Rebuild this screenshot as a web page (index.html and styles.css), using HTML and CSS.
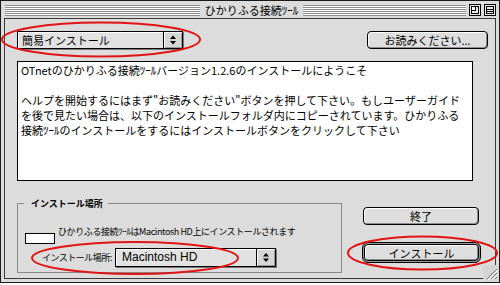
FILE: index.html
```html
<!DOCTYPE html>
<html lang="ja">
<head>
<meta charset="utf-8">
<title>ひかりふる接続ﾂｰﾙ</title>
<link rel="stylesheet" href="styles.css">
</head>
<body>
<div class="window">
  <div class="titlebar">
    <div class="grooves left"></div>
    <div class="title">ひかりふる接続ﾂｰﾙ</div>
    <div class="grooves right"></div>
    <div class="wbox">
      <svg width="12" height="12" viewBox="0 0 12 12"><rect x="0.5" y="0.5" width="11" height="11" fill="#e8e8e8" stroke="#000"/><rect x="2.5" y="2.5" width="7" height="7" fill="none" stroke="#000"/><rect x="2.5" y="2.5" width="4" height="4" fill="#fff" stroke="#000"/></svg>
    </div>
    <div class="wbox">
      <svg width="12" height="12" viewBox="0 0 12 12"><rect x="0.5" y="0.5" width="11" height="11" fill="#e8e8e8" stroke="#000"/><rect x="2.5" y="2.5" width="7" height="7" fill="none" stroke="#000"/><line x1="2" y1="5.5" x2="10" y2="5.5" stroke="#000"/><line x1="2" y1="7.5" x2="10" y2="7.5" stroke="#000"/></svg>
    </div>
  </div>
  <div class="frame">
    <div class="toprow">
      <div class="popup mode">
        <span class="popup-label">簡易インストール</span>
        <span class="popup-arrows"><svg width="18" height="16" viewBox="0 0 18 16"><polygon points="6,7 9,3.5 12,7" fill="#000"/><polygon points="6,9 9,12.5 12,9" fill="#000"/></svg></span>
      </div>
      <button class="btn readme">お読みください...</button>
    </div>
    <div class="textarea">
      <div class="line">OTnetのひかりふる接続ﾂｰﾙバージョン1.2.6のインストールにようこそ</div>
      <div class="line">&nbsp;</div>
      <div class="line">ヘルプを開始するにはまず"お読みください"ボタンを押して下さい。もしユーザーガイド</div>
      <div class="line">を後で見たい場合は、以下のインストールフォルダ内にコピーされています。ひかりふる</div>
      <div class="line">接続ﾂｰﾙのインストールをするにはインストールボタンをクリックして下さい</div>
    </div>
    <div class="bottomrow">
      <fieldset class="group">
        <legend>インストール場所</legend>
        <div class="destrow">
          <span class="diskbox"></span>
          <span class="small">ひかりふる接続ﾂｰﾙはMacintosh HD上にインストールされます</span>
        </div>
        <div class="selrow">
          <span class="sel-label">インストール場所:</span>
          <div class="popup disk">
            <span class="popup-label latin">Macintosh HD</span>
            <span class="popup-arrows"><svg width="18" height="17" viewBox="0 0 18 17"><polygon points="6,7.5 9,4 12,7.5" fill="#000"/><polygon points="6,9.5 9,13 12,9.5" fill="#000"/></svg></span>
          </div>
        </div>
      </fieldset>
      <div class="buttons">
        <button class="btn quit">終了</button>
        <div class="default-ring"><button class="btn install">インストール</button></div>
      </div>
    </div>
  </div>
</div>
<svg class="growbox" width="16" height="16" viewBox="0 0 16 16"><rect x="0" y="0" width="16" height="16" fill="#d4d4d4"/><path d="M4 14 L14 4 M8 14 L14 8 M12 14 L14 12" stroke="#777" stroke-width="1"/><path d="M5 15 L15 5 M9 15 L15 9" stroke="#fff" stroke-width="1"/></svg>
<svg class="marks" width="500" height="285" viewBox="0 0 500 285">
  <ellipse cx="101" cy="39.5" rx="99" ry="17" fill="none" stroke="#e01414" stroke-width="2"/>
  <ellipse cx="135" cy="258" rx="103" ry="16" fill="none" stroke="#e01414" stroke-width="2"/>
  <ellipse cx="422.5" cy="253" rx="74.5" ry="16.5" fill="none" stroke="#e01414" stroke-width="2"/>
</svg>
</body>
</html>
```

FILE: styles.css
```css
* { box-sizing: border-box; }
html, body { margin: 0; padding: 0; }
body {
  width: 500px;
  height: 285px;
  background: #ffffff;
  font-family: "Noto Sans CJK JP", sans-serif;
  color: #000;
  position: relative;
  overflow: hidden;
}
.window {
  width: 500px;
  height: 283px;
  border: 1px solid #1a1a1a;
  background: #dcdcdc;
  display: flex;
  flex-direction: column;
  padding: 0 3px 3px 3px;
}
.titlebar {
  height: 17px;
  display: flex;
  align-items: flex-start;
  padding: 3px 0 0 1px;
}
.grooves {
  height: 11px;
  margin-top: 1px;
  background: repeating-linear-gradient(to bottom, #8c8c8c 0 1px, #ffffff 1px 2px);
}
.grooves.left { width: 195px; }
.grooves.right { flex: 1; }
.title {
  width: 103px;
  text-align: center;
  font-size: 11px;
  line-height: 13px;
  white-space: nowrap;
}
.wbox { width: 12px; height: 12px; margin-left: 3px; }
.wbox svg { display: block; }
.frame {
  flex: 1;
  border: 1px solid #3a3a3a;
  padding: 12px 7px 0 12px;
  display: flex;
  flex-direction: column;
}
.toprow {
  display: flex;
  justify-content: space-between;
  align-items: flex-start;
}
.popup {
  display: flex;
  border: 1px solid #000;
  background: #e2e2e2;
  box-shadow: 1px 1px 0 #777, inset 1px 1px 0 #fff;
}
.popup.mode { width: 166px; height: 18px; }
.popup.disk { width: 161px; height: 19px; }
.popup-label {
  flex: 1;
  font-size: 11px;
  line-height: 16px;
  padding-left: 4px;
  white-space: nowrap;
}
.popup-label.latin {
  font-family: "Liberation Sans", sans-serif;
  font-size: 12px;
  padding-left: 6px;
}
.popup-arrows {
  width: 19px;
  border-left: 1px solid #000;
  background: #d6d6d6;
  box-shadow: inset 1px 1px 0 #fff, inset -1px -1px 0 #999;
}
.popup-arrows svg { display: block; }
.btn {
  font-family: "Noto Sans CJK JP", sans-serif;
  font-size: 11px;
  line-height: 14px;
  color: #000;
  border: 1px solid #000;
  border-radius: 4px;
  background: #dedede;
  box-shadow: inset 1px 1px 0 #fff, inset -1px -1px 0 #8e8e8e;
  padding: 0;
  margin: 0;
  white-space: nowrap;
}
.btn.readme { width: 121px; height: 18px; }
.textarea {
  width: 456px;
  height: 120px;
  margin-top: 12px;
  background: #fff;
  border: 1px solid #000;
  padding: 1px 3px;
  font-size: 11px;
  line-height: 15px;
}
.line { white-space: nowrap; }
.bottomrow {
  display: flex;
  margin-top: 17px;
}
.group {
  width: 325px;
  height: 75px;
  margin: 0;
  padding: 0 0 0 7px;
  border: 1px solid #8a8a8a;
  min-width: 0;
}
.group legend {
  font-size: 9px;
  font-weight: bold;
  line-height: 11px;
  padding: 0 5px 0 7px;
  margin-left: -1px;
}
.destrow {
  display: flex;
  align-items: flex-start;
  margin-top: 17px;
}
.diskbox {
  width: 30px;
  height: 11px;
  margin-top: 7px;
  background: #fff;
  border: 1px solid #000;
}
.small {
  font-size: 9px;
  line-height: 11px;
  margin-left: 3px;
  letter-spacing: -0.4px;
  white-space: nowrap;
}
.selrow {
  display: flex;
  align-items: center;
  margin-top: 4px;
}
.sel-label {
  width: 90px;
  padding-left: 17px;
  font-size: 9px;
  line-height: 11px;
  letter-spacing: -0.5px;
  white-space: nowrap;
}
.buttons {
  width: 119px;
  margin-left: 20px;
  padding-top: 9px;
  display: flex;
  flex-direction: column;
  align-items: flex-start;
}
.btn.quit { width: 116px; height: 18px; margin-left: 1px; }
.default-ring {
  margin-top: 17px;
  width: 119px;
  height: 21px;
  border: 1px solid #000;
  border-radius: 6px;
  background: #9a9a9a;
  padding: 1px;
}
.btn.install { width: 115px; height: 17px; display: block; }
.growbox { position: absolute; left: 483px; top: 265px; }
.marks { position: absolute; left: 0; top: 0; pointer-events: none; }
```
